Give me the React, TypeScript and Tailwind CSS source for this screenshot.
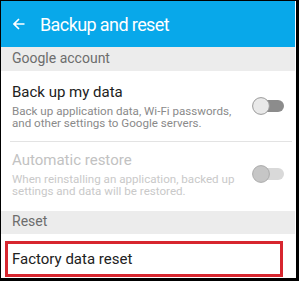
import React from "react"

function Toggle({ disabled }: { disabled?: boolean }) {
  return (
    <svg width="32" height="18" viewBox="0 0 32 18">
      <rect x="6" y="3" width="26" height="12" rx="6" fill={disabled ? "#d9d9d9" : "#8c8c8c"} />
      <circle
        cx="9"
        cy="9"
        r="8.4"
        fill={disabled ? "#c6c6c6" : "#e9e9e9"}
        stroke={disabled ? "#acacac" : "#9a9a9a"}
        strokeWidth="1"
      />
    </svg>
  )
}

function SettingRow({
  title,
  desc,
  disabled,
  rowH,
  padTop,
  toggleTop,
}: {
  title: string
  desc: string
  disabled?: boolean
  rowH: string
  padTop: string
  toggleTop: string
}) {
  return (
    <div className={`flex ${rowH}`}>
      <div className={`w-[251px] pl-[11px] pr-[8px] ${padTop}`}>
        <div className={`text-[15px] leading-none ${disabled ? "text-[#c2c2c2]" : "text-[#212121]"}`}>
          {title}
        </div>
        <div className={`mt-[5px] text-[11.6px] leading-[12px] ${disabled ? "text-[#c9c9c9]" : "text-[#8a8a8a]"}`}>
          {desc}
        </div>
      </div>
      <div className={toggleTop}>
        <Toggle disabled={disabled} />
      </div>
    </div>
  )
}

export default function App() {
  return (
    <div className="w-[299px] h-[281px] bg-black pt-px pl-px pr-[3px] pb-[3px] font-['Roboto',sans-serif]">
      <div className="h-full bg-white pr-px flex flex-col">
        {/* Toolbar */}
        <div className="h-[46px] bg-[#08a8ea] flex items-center">
          <svg className="ml-[12px]" width="12" height="12" viewBox="0 0 12 12" fill="none">
            <path d="M11.5 6H1M6 1L1 6l5 5" stroke="white" strokeWidth="1.6" />
          </svg>
          <span className="ml-[15px] pt-[1px] text-[18px] leading-none tracking-[-0.6px] text-white">
            Backup and reset
          </span>
        </div>

        <div className="h-[24px] bg-[#ececec] pl-[11px] pt-[4px] text-[14px] leading-none text-[#6d6d6d]">
          Google account
        </div>

        <SettingRow
          title="Back up my data"
          desc="Back up application data, Wi-Fi passwords, and other settings to Google servers."
          rowH="h-[70px]"
          padTop="pt-[14px]"
          toggleTop="mt-[26px]"
        />
        <div className="h-px bg-[#e3e3e3] ml-[9px] mr-[3px]" />
        <SettingRow
          title="Automatic restore"
          desc="When reinstalling an application, backed up settings and data will be restored."
          disabled
          rowH="h-[69px]"
          padTop="pt-[11px]"
          toggleTop="mt-[23px]"
        />

        <div className="h-[23px] bg-[#ececec] pl-[11px] pt-[3px] text-[14px] leading-none text-[#6d6d6d]">
          Reset
        </div>

        <div className="h-[44px] pt-[7px] pl-[4px]">
          <div className="w-[278px] h-[36px] border-[3px] border-[#d7262f] flex items-center pl-[4px]">
            <span className="text-[15px] leading-none text-[#212121]">Factory data reset</span>
          </div>
        </div>
      </div>
    </div>
  )
}
